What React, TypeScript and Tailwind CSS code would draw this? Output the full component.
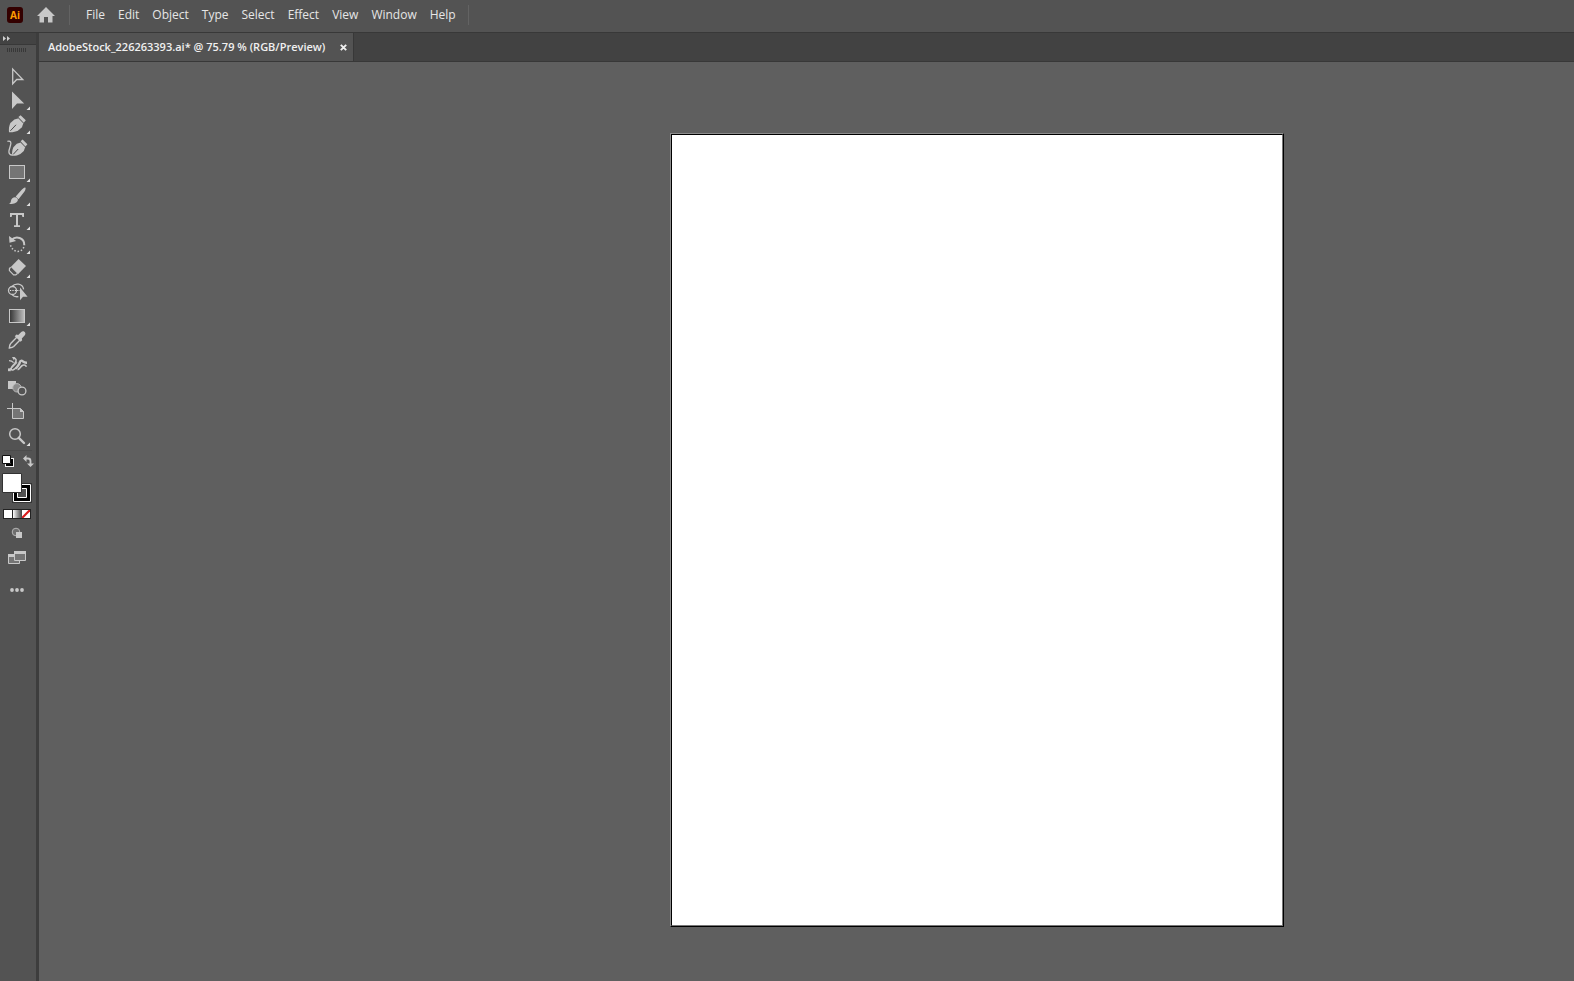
import React, { useState } from 'react';
import { clsx } from 'clsx';

const menus = ['File', 'Edit', 'Object', 'Type', 'Select', 'Effect', 'View', 'Window', 'Help'];

type Tool = {
  name: string;
  icon: React.ReactNode;
  hasMore?: boolean;
};

const tools: Tool[] = [
  {
    name: 'Selection Tool',
    icon: <path d="M12.7 4v14.8l4-4.3h6.1z" fill="none" stroke="#c8c8c8" strokeWidth="1.3" />,
  },
  {
    name: 'Direct Selection Tool',
    hasMore: true,
    icon: <path d="M12 2.5V20l5-5.4h7.2z" />,
  },
  {
    name: 'Pen Tool',
    hasMore: true,
    icon: (
      <>
        <path d="M9 19.2c-.4-3.2 0-6.4 1.4-9.2l4-3.6 4.4-1.2 4.6 4.8-1.4 4.2-3.6 3c-2.8 1.6-6 2.2-9.4 2z" />
        <path d="m18.4 4 2.2-1.8 5.2 5-2 2.6z" />
        <path d="m18 4.8 5.4 5.6" stroke="#7a7a7a" strokeWidth=".8" />
        <path d="m10.400 17.800 5.600-6" stroke="#484848" strokeWidth="1" />
      </>
    ),
  },
  {
    name: 'Curvature Tool',
    icon: (
      <>
        <path d="M12 18.8c0-3.4.2-6 1.4-8.6l3.4-3.4 4-1.4 4.400 4.600-1.400 4-3.400 3c-2.600 1.400-5.400 2-8.400 1.800z" />
        <path d="m20.6 4.2 2-1.8 4.8 4.8-2 2.4z" />
        <path d="m20.2 5 5 5.2" stroke="#7a7a7a" strokeWidth=".8" />
        <path d="M7.4 4.400c3.200-1 4.200 1 3 4.400-1.200 3.600-3.400 8.600 1.800 9.400" fill="none" stroke="#c8c8c8" strokeWidth="1.3" />
        <path d="m13.2 17.4 5-5.4" stroke="#484848" strokeWidth="1" />
      </>
    ),
  },
  {
    name: 'Rectangle Tool',
    hasMore: true,
    icon: <rect x="9.5" y="4.5" width="15" height="13" fill="#757575" stroke="#c8c8c8" />,
  },
  {
    name: 'Paintbrush Tool',
    hasMore: true,
    icon: (
      <>
        <path d="M25.3 2.6c.6.6.3 2.2-.8 4l-6 7.6-2.8-2.6 6-6.8c1.4-1.6 3-2.800 3.600-2.200z" />
        <path d="M15 12.2c1.5 0 2.9 1.3 2.9 2.8-.6 3-4.6 4.4-9.2 4 1.8-.8 2-1.8 2.3-3.6.4-1.9 2-3.2 4-3.2z" />
      </>
    ),
  },
  {
    name: 'Type Tool',
    hasMore: true,
    icon: <path d="M10 4h14v4h-1.6l-.5-2H18v10.3h2V18h-6v-1.700h2V6h-3.900l-.5 2H10z" />,
  },
  {
    name: 'Rotate Tool',
    hasMore: true,
    icon: (
      <>
        <path d="M11.5 7C16 2.5 24.5 4.5 24.3 12.3" fill="none" stroke="#c8c8c8" strokeWidth="2" />
        <path d="m9 3 .5 6.8 6.6-1.8z" />
        <path d="M23.8 14c-2 6-11 6.5-13.5-2.5" fill="none" stroke="#c8c8c8" strokeWidth="1.5" strokeDasharray="1.5 1.8" />
      </>
    ),
  },
  {
    name: 'Eraser Tool',
    hasMore: true,
    icon: (
      <>
        <path d="m18.6 2 7.4 7-8 8.2-7.2-7.2z" />
        <path d="m10.6 10.2-1.2 1.6v1.8l4.2 4.3h2.2l1.6-1.4" fill="none" stroke="#c8c8c8" strokeWidth="1.2" />
      </>
    ),
  },
  {
    name: 'Shape Builder Tool',
    icon: (
      <>
        <circle cx="12.5" cy="9.5" r="4" fill="none" stroke="#c8c8c8" strokeWidth="1.3" />
        <path d="M12 5.4C15 2 22.5 2 23.6 8.400M12 13.600c1.800 2 4 2.400 6.400 2" fill="none" stroke="#c8c8c8" strokeWidth="1.3" />
        <path d="M10 9.5h10" stroke="#e4e4e4" strokeWidth="1.2" strokeDasharray="1.2 1.2" />
        <path d="M20 6.5v12.7l3-3.5h4.6z" />
      </>
    ),
  },
  {
    name: 'Gradient Tool',
    hasMore: true,
    icon: (
      <>
        <defs>
          <linearGradient id="tool-gradient">
            <stop offset="0" stopColor="#333333" />
            <stop offset="1" stopColor="#c0c0c0" />
          </linearGradient>
        </defs>
        <rect x="9.5" y="4.5" width="15" height="13" fill="url(#tool-gradient)" stroke="#c8c8c8" />
      </>
    ),
  },
  {
    name: 'Eyedropper Tool',
    icon: (
      <>
        <path d="m17 8-6.3 6.6c-1 1-1.2 2.4-1.4 4.4 2-.2 3.4-.4 4.4-1.4l6.300-6.600" fill="none" stroke="#c8c8c8" strokeWidth="1.4" />
        <path d="m14.8 7.2 1.6-1.6 1.800.4 2.800-2.800c2.600-2.600 6 .8 3.600 3.400l-2.800 2.800.4 1.800-1.600 1.600z" />
      </>
    ),
  },
  {
    name: 'Puppet Warp Tool',
    icon: (
      <>
        <path d="M13 5c3.600 0 4 2.600 1.800 5.400s-4.400 4.600-3.600 6 3.200.2 5-2" fill="none" stroke="#c8c8c8" strokeWidth="1.6" />
        <path d="M15.600 15.600c1.800-1.600 2.800-3.200 3.800-5 .6-1.400.4-3 2-3s1.600 2.400 5.600 2.200" fill="none" stroke="#c8c8c8" strokeWidth="2.4" />
        <path d="M17.600 16.600c2.400-.4 2.800-3.600 5.200-4.400 1.600-.4 3-.2 3.600 1.600" fill="none" stroke="#c8c8c8" strokeWidth="1.600" />
        <path d="m9.600 16.600 7.400-7.200M9 7.600c2 0 3.400.6 4.600 2" fill="none" stroke="#c8c8c8" strokeWidth="1.2" />
        <path d="M12 4h3l-1 3.600z" />
        <path d="M8 15.400h2.800v2.800H8z" />
      </>
    ),
  },
  {
    name: 'Blend Tool',
    icon: (
      <>
        <path d="M8 4h8v8H8z" />
        <circle cx="17" cy="10.8" r="4.2" fill="#8a8a8a" stroke="#b4b4b4" />
        <circle cx="22" cy="14" r="3.9" fill="#535353" stroke="#c8c8c8" strokeWidth="1.3" />
      </>
    ),
  },
  {
    name: 'Artboard Tool',
    icon: (
      <>
        <path d="M12.5 7.5h8l3 3v7h-11z" fill="#757575" stroke="#c8c8c8" />
        <path d="M12.5 2v6M7 7.5h5" fill="none" stroke="#c8c8c8" />
        <path d="M20 7v4h4z" />
      </>
    ),
  },
  {
    name: 'Zoom Tool',
    hasMore: true,
    icon: (
      <>
        <circle cx="15" cy="9" r="5.3" fill="none" stroke="#c8c8c8" strokeWidth="1.5" />
        <path d="m18.8 12.8 5.2 5.2" stroke="#c8c8c8" strokeWidth="2.4" strokeLinecap="round" />
      </>
    ),
  },
];

function MenuBar() {
  return (
    <header className="h-8 shrink-0 flex items-center pb-0.5 bg-[#535353] text-[#e6e6e6] text-xs">
      <div className="ml-[7px] w-4 h-4 flex items-center justify-center rounded-[3px] bg-[#330000] text-[#ff9a00] text-[10px] leading-4 font-bold">
        Ai
      </div>
      <button type="button" aria-label="Home" className="ml-[14px]">
        <svg width="18" height="16" viewBox="0 0 18 16" fill="#c8c8c8">
          <path d="M9 0 0 9h2.5v6.5H7V10h4v5.5h4.500V9H18z" />
        </svg>
      </button>
      <div className="ml-[14px] w-px h-5 bg-[#636363]" />
      <nav className="flex items-center ml-4 gap-[13px]">
        {menus.map(menu => (
          <button key={menu} type="button" className="leading-4">
            {menu}
          </button>
        ))}
      </nav>
      <div className="ml-3 w-px h-5 bg-[#636363]" />
    </header>
  );
}

function ColorControls() {
  return (
    <div className="flex flex-col">
      <div className="flex justify-between pl-[2px] pr-[2px] pt-1">
        <button type="button" aria-label="Default Fill and Stroke">
          <svg width="12" height="12" viewBox="0 0 12 12">
            <path d="M3 3h9v9H3z" fill="#f2f2f2" />
            <path d="M4 4h7v7H4z" fill="#000000" />
            <path d="M6.5 6.5h2v2h-2z" fill="#535353" stroke="#f2f2f2" />
            <path d="M.5.5h8v8h-8z" fill="#ffffff" stroke="#111111" />
          </svg>
        </button>
        <button type="button" aria-label="Swap Fill and Stroke">
          <svg width="12" height="12" viewBox="0 0 12 12" fill="#c8c8c8">
            <path d="M4.5 0v7L1 3.5zM5 8.5h7L8.500 12z" />
            <path d="M4 3.5h2c1.500 0 2.500 1 2.500 2.500v3" fill="none" stroke="#c8c8c8" strokeWidth="1.8" />
          </svg>
        </button>
      </div>

      {/* Fill sits over the stroke swatch */}
      <button type="button" aria-label="Fill and Stroke" className="mt-[6px] ml-[2px] self-start">
        <svg width="30" height="30" viewBox="0 0 30 30">
          <path d="M10.5 10.5h19v19h-19z" fill="#000000" stroke="#333333" />
          <path d="M11.5 11.5h17v17h-17z" fill="#000000" stroke="#ffffff" />
          <path d="M15.5 15.5h9v9h-9z" fill="#535353" stroke="#ffffff" />
          <path d="M.5.5h19v19H.5z" fill="#ffffff" stroke="#333333" />
        </svg>
      </button>

      <div className="flex mt-[6px] ml-[3px] self-start border border-[#222222]">
        <button type="button" aria-label="Color" className="w-[9px] h-2 bg-white border-r border-[#222222]" />
        <button type="button" aria-label="Gradient" className="w-[9px] h-2 bg-linear-to-r from-white to-[#444444]" />
        <button type="button" aria-label="None">
          <svg width="8" height="8" viewBox="0 0 8 8">
            <path d="M0 0h8v8H0z" fill="#ffffff" />
            <path d="m0 8 8-8" stroke="#d91c1c" strokeWidth="2.2" />
          </svg>
        </button>
      </div>
    </div>
  );
}

function Toolbar() {
  const [activeTool, setActiveTool] = useState('');

  return (
    <aside className="w-9 shrink-0 flex flex-col bg-[#535353]">
      <button type="button" aria-label="Expand toolbar" className="h-3 shrink-0 flex items-center pl-[3px] bg-[#434343] border-b border-[#383838]">
        <svg width="8" height="5" viewBox="0 0 8 5" fill="#d0d0d0">
          <path d="m0 0 3 2.5L0 5zM4 0l3 2.5L4 5z" />
        </svg>
      </button>
      <div className="h-5 shrink-0 pt-[3px] pl-[7px]">
        <svg width="20" height="4" viewBox="0 0 20 4">
          <path d="M0 2h20" stroke="#383838" strokeWidth="4" strokeDasharray="1 1" />
        </svg>
      </div>

      {tools.map(tool => (
        <button
          key={tool.name}
          type="button"
          aria-label={tool.name}
          onClick={() => setActiveTool(tool.name)}
          className={clsx('h-6 shrink-0', activeTool === tool.name && 'bg-[#3a3a3a]')}
        >
          <svg width="36" height="24" viewBox="0 0 36 24" fill="#c8c8c8">
            {tool.icon}
            {tool.hasMore && <path d="M30 17.5V21h-3.500z" fill="#e0e0e0" />}
          </svg>
        </button>
      ))}

      <div className="mt-px mx-1 h-px shrink-0 bg-[#4b4b4b]" />
      <ColorControls />

      <button type="button" aria-label="Drawing Mode" className="mt-2">
        <svg width="36" height="12" viewBox="0 0 36 12">
          <circle cx="16" cy="5" r="3.8" fill="#6e6e6e" stroke="#b4b4b4" />
          <path d="M16 5h6v6h-6z" fill="#c8c8c8" />
        </svg>
      </button>
      <button type="button" aria-label="Change Screen Mode" className="mt-3">
        <svg width="36" height="14" viewBox="0 0 36 14">
          <path d="M8.5 3.5h11v9h-11z" fill="#757575" stroke="#c8c8c8" />
          <path d="M8 3h12v3H8z" fill="#c8c8c8" />
          <path d="M14.5.5h11v9h-11z" fill="#757575" stroke="#c8c8c8" />
          <path d="M14 0h12v3H14z" fill="#c8c8c8" />
        </svg>
      </button>
      <button type="button" aria-label="Edit Toolbar" className="mt-[22px]">
        <svg width="36" height="6" viewBox="0 0 36 6" fill="#c8c8c8">
          <circle cx="12" cy="3" r="1.9" />
          <circle cx="17" cy="3" r="1.9" />
          <circle cx="22" cy="3" r="1.9" />
        </svg>
      </button>
    </aside>
  );
}

function DocumentTabs() {
  return (
    <div className="h-[29px] shrink-0 flex bg-[#424242] border-b border-[#383838]">
      <div className="flex items-center pl-[9px] pr-[6px] gap-[15px] bg-[#535353] border-r border-[#383838] text-[#f0f0f0]">
        <span className="text-[11px] leading-4 font-semibold whitespace-nowrap">
          AdobeStock_226263393.ai* @ 75.79 % (RGB/Preview)
        </span>
        <button type="button" aria-label="Close document">
          <svg width="7" height="7" viewBox="0 0 7 7">
            <path d="m.8.8 5.400 5.400M6.200.8.8 6.200" stroke="#f0f0f0" strokeWidth="1.9" />
          </svg>
        </button>
      </div>
    </div>
  );
}

export default function App() {
  return (
    <div className="min-h-screen flex flex-col bg-[#535353] font-['Open_Sans','Noto_Sans',sans-serif] select-none">
      <MenuBar />
      <div className="flex-1 flex border-t border-[#383838]">
        <Toolbar />
        <div className="flex-1 min-w-0 flex flex-col border-l-3 border-[#3d3d3d]">
          <DocumentTabs />
          <main className="flex-1 flex items-start justify-end pt-[71px] pr-[290px] pb-[54px] bg-[#5f5f5f]">
            <div className="border border-[#8c8c8c] border-r-black border-b-black">
              <div className="w-[612px] h-[792px] bg-white border border-black border-r-[#777777] border-b-[#777777]" />
            </div>
          </main>
        </div>
      </div>
    </div>
  );
}
